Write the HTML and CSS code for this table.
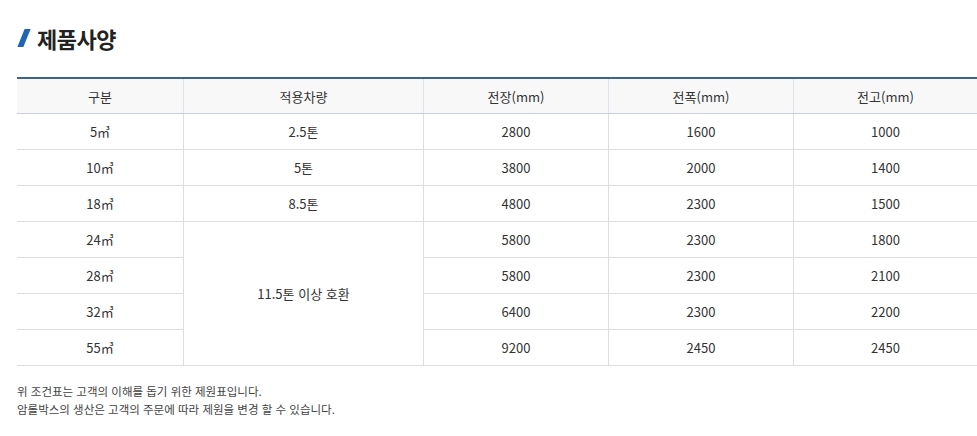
FILE: index.html
```html
<!DOCTYPE html>
<html lang="ko">
<head>
<meta charset="utf-8">
<link rel="stylesheet" href="styles.css">
</head>
<body>
<div class="wrap">
  <h2 class="title"><span class="slash"></span>제품사양</h2>
  <table class="spec">
    <thead>
      <tr><th class="c1">구분</th><th class="c2">적용차량</th><th class="c3">전장(mm)</th><th class="c3">전폭(mm)</th><th>전고(mm)</th></tr>
    </thead>
    <tbody>
      <tr><td>5㎥</td><td>2.5톤</td><td>2800</td><td>1600</td><td>1000</td></tr>
      <tr><td>10㎥</td><td>5톤</td><td>3800</td><td>2000</td><td>1400</td></tr>
      <tr><td>18㎥</td><td>8.5톤</td><td>4800</td><td>2300</td><td>1500</td></tr>
      <tr><td>24㎥</td><td rowspan="4">11.5톤 이상 호환</td><td>5800</td><td>2300</td><td>1800</td></tr>
      <tr><td>28㎥</td><td>5800</td><td>2300</td><td>2100</td></tr>
      <tr><td>32㎥</td><td>6400</td><td>2300</td><td>2200</td></tr>
      <tr><td>55㎥</td><td>9200</td><td>2450</td><td>2450</td></tr>
    </tbody>
  </table>
  <div class="note">
    <p>위 조건표는 고객의 이해를 돕기 위한 제원표입니다.</p>
    <p>암롤박스의 생산은 고객의 주문에 따라 제원을 변경 할 수 있습니다.</p>
  </div>
</div>
</body>
</html>
```
FILE: styles.css
```css
html, body { margin: 0; padding: 0; background: #fff; }
body { font-family: "Noto Sans CJK KR", "Noto Sans", sans-serif; color: #333; }
.wrap { padding: 22px 0 0 17px; width: 960px; }
.title { margin: 0; height: 32px; display: flex; align-items: center; gap: 10px; font-size: 22px; font-weight: 700; color: #222; letter-spacing: -0.5px; }
.slash { display: inline-block; width: 6px; height: 18px; background: #2064b4; transform: skewX(-22deg); margin-left: 4px; }
.spec { margin-top: 23px; width: 960px; border-collapse: collapse; table-layout: fixed; font-size: 13px; }
.spec th, .spec td { text-align: center; height: 35px; padding: 0; border-bottom: 1px solid #dedede; border-left: 1px solid #dedede; color: #333; }
.spec th:first-child, .spec tbody tr td:first-child { border-left: 0; }
.spec thead th { height: 34px; background: #f8f8f9; font-weight: 400; border-top: 2px solid #3d6589; border-bottom: 1px solid #c8cfdc; border-left-color: #dfe2ea; }
.spec .c1 { width: 166px; }
.spec .c2 { width: 239px; }
.spec .c3 { width: 184px; }
.note { margin-top: 16px; font-size: 11.5px; color: #444; }
.note p { margin: 0; line-height: 18px; }
```
